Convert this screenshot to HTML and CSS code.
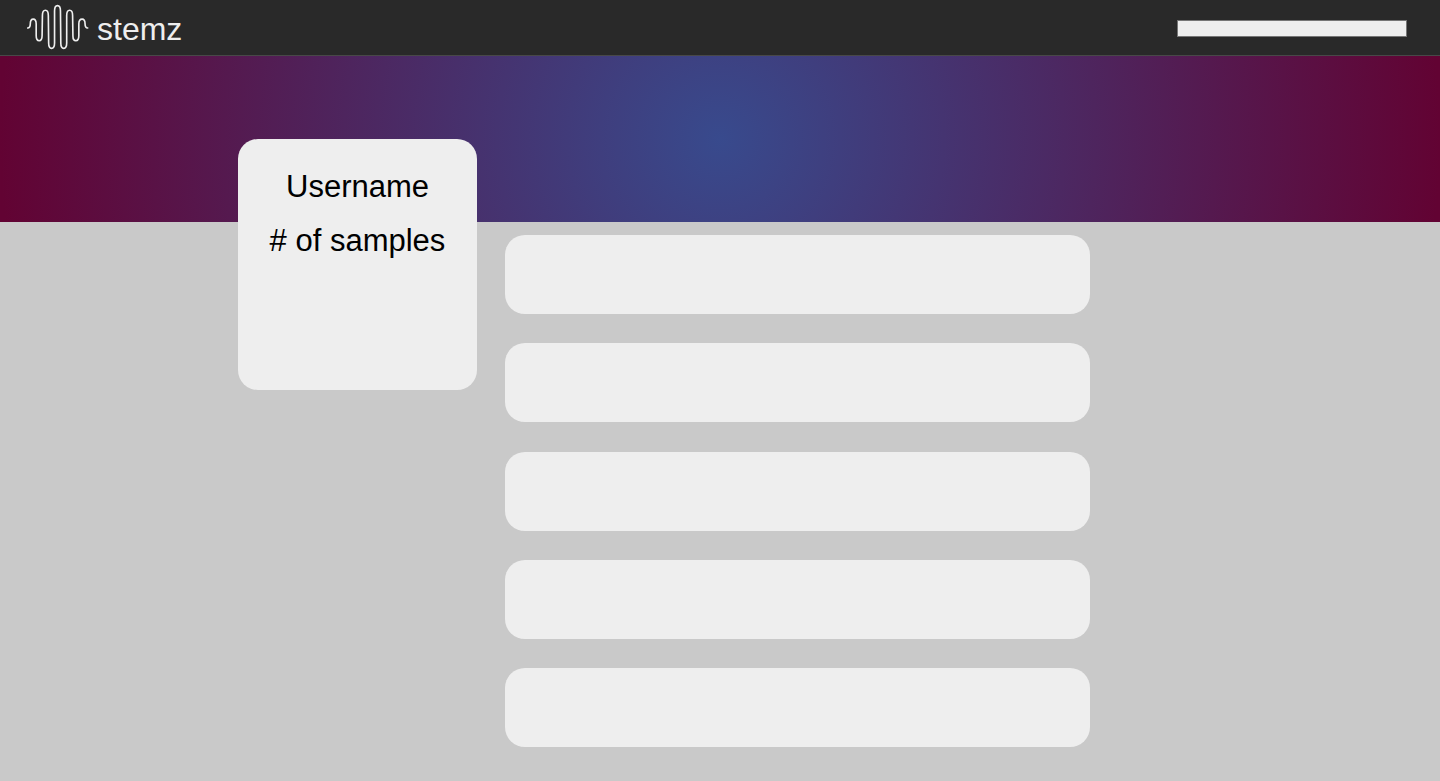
FILE: index.html
```html
<!DOCTYPE html>
<html lang="en">
<head>
  <meta charset="utf-8">
  <meta name="viewport" content="width=device-width, initial-scale=1">
  <title>stemz</title>
  <link rel="stylesheet" href="styles.css">
</head>
<body>
  <header class="topbar">
    <a class="brand" href="#">
      <svg class="brand-mark" viewBox="20 12 189 144" aria-hidden="true">
        <path d="M22 84C28 84 30 80 30 72C30 62 32 57 39 57C46 57 48 63 48 72V108C48 118 51 123 57 123C64 123 66 117 66 108L67 46C67 36 70 30 76 30C83 30 85 37 85 46L86 130C86 140 89 146 95 146C102 146 104 139 104 130V32C104 22 107 16 113 16C120 16 122 22 122 32L123 130C123 140 126 146 132 146C139 146 141 139 141 130V46C141 36 144 30 150 30C157 30 159 37 159 46L160 108C160 117 163 123 169 123C176 123 178 118 178 108V72C178 63 181 57 188 57C195 57 197 62 197 72C197 80 199 84 205 84"/>
      </svg>
      <span class="brand-name">stemz</span>
    </a>
    <input class="search" type="text" aria-label="Search">
  </header>
  <div class="hero"></div>
  <main class="content">
    <aside class="profile">
      <p class="profile-line">Username</p>
      <p class="profile-line"># of samples</p>
    </aside>
    <ul class="samples">
      <li class="sample"></li>
      <li class="sample"></li>
      <li class="sample"></li>
      <li class="sample"></li>
      <li class="sample"></li>
    </ul>
  </main>
</body>
</html>
```
FILE: styles.css
```css
* {
  box-sizing: border-box;
}

body {
  display: flex;
  flex-direction: column;
  min-height: 100vh;
  margin: 0;
  background: #c9c9c9;
  color: #000;
  font-family: "Liberation Sans", Arial, sans-serif;
}

.topbar {
  display: flex;
  align-items: center;
  justify-content: space-between;
  height: 56px;
  padding: 0 33px 0 27px;
  background: #292929;
  border-bottom: 1px solid #484848;
}

.brand {
  display: flex;
  align-items: center;
  gap: 8px;
  color: #eee;
  text-decoration: none;
}

.brand-mark {
  width: 62px;
  height: 48px;
  fill: none;
  stroke: #eee;
  stroke-width: 5;
  stroke-linecap: round;
}

.brand-name {
  padding-top: 2px;
  font-size: 32px;
  line-height: 44px;
}

.search {
  width: 230px;
  height: 17px;
  margin-top: 2px;
  padding: 0 4px;
  border: 1px solid #767676;
  border-radius: 0;
  background: #eee;
}

.hero {
  height: 166px;
  background: radial-gradient(circle farthest-side, #384a8d, #620333);
}

.content {
  display: flex;
  flex: 1;
  gap: 28px;
  width: 100%;
  max-width: 1440px;
  margin: 0 auto;
  padding: 13px 350px 34px 238px;
}

.profile {
  flex: 0 0 239px;
  height: 251px;
  margin-top: -96px;
  padding-top: 30px;
  border-radius: 20px;
  background: #eee;
  text-align: center;
}

.profile-line {
  margin: 0 0 18px;
  font-size: 31px;
  line-height: 36px;
}

.samples {
  display: flex;
  flex: 1;
  flex-direction: column;
  justify-content: space-between;
  gap: 20px;
  margin: 0;
  padding: 0;
  list-style: none;
}

.sample {
  height: 79px;
  border-radius: 20px;
  background: #eee;
}
```
